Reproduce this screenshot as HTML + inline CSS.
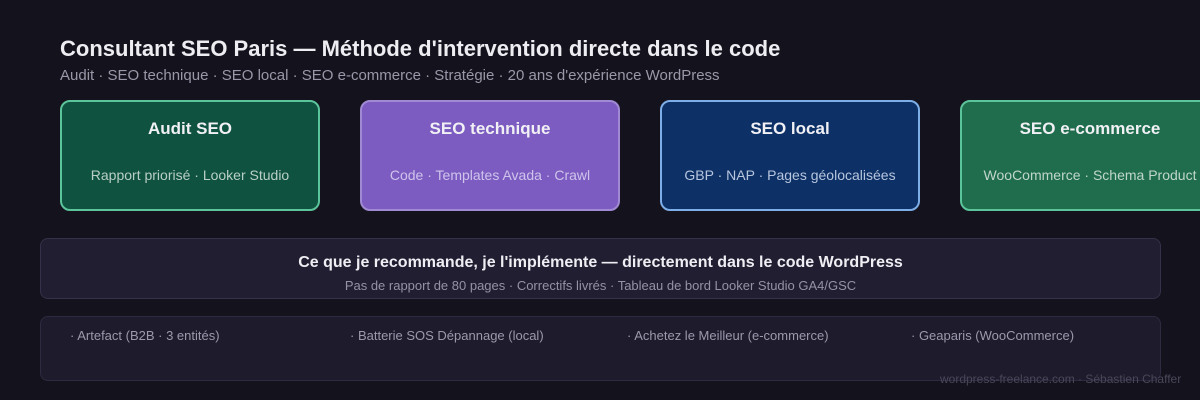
<!DOCTYPE html><html><head><style>
body{margin:0;width:1200px;height:400px;background:#14131d;font-family:"Liberation Sans",sans-serif;position:relative;overflow:hidden}
.a{position:absolute}
.card{position:absolute;top:100px;width:260px;height:111px;border-radius:10px;border:2px solid;box-sizing:border-box;text-align:center}
.card b{display:block;margin-top:17px;font-size:17px;color:#f0f0f5}
.card span{display:block;margin-top:28px;font-size:14px}
</style></head><body>
<div class="a" style="left:60px;top:36px;font-size:22px;font-weight:bold;color:#ededf2">Consultant SEO Paris — Méthode d'intervention directe dans le code</div>
<div class="a" style="left:60px;top:67px;font-size:15px;color:#9a98a8">Audit · SEO technique · SEO local · SEO e-commerce · Stratégie · 20 ans d'expérience WordPress</div>
<div class="card" style="left:60px;background:#0f5240;border-color:#5cc49a"><b>Audit SEO</b><span style="color:#b9cfc6">Rapport priorisé · Looker Studio</span></div>
<div class="card" style="left:360px;background:#7c5cc0;border-color:#a08ad4"><b>SEO technique</b><span style="color:#cfc4ec">Code · Templates Avada · Crawl</span></div>
<div class="card" style="left:660px;background:#0d3066;border-color:#7eaee8"><b>SEO local</b><span style="color:#b7c6de">GBP · NAP · Pages géolocalisées</span></div>
<div class="card" style="left:960px;background:#1f6d4c;border-color:#5cc49a"><b>SEO e-commerce</b><span style="color:#c0d6cc">WooCommerce · Schema Product</span></div>
<div class="a" style="left:40px;top:238px;width:1121px;height:61px;box-sizing:border-box;border:1px solid #35314a;border-radius:8px;background:#211e31;text-align:center">
<div style="margin-top:15px;font-size:16px;font-weight:bold;color:#eeeef3">Ce que je recommande, je l'implémente — directement dans le code WordPress</div>
<div style="margin-top:6px;font-size:13px;color:#9492a4">Pas de rapport de 80 pages · Correctifs livrés · Tableau de bord Looker Studio GA4/GSC</div></div>
<div class="a" style="left:40px;top:316px;width:1121px;height:65px;box-sizing:border-box;border:1px solid #2e2a40;border-radius:8px;background:#1e1b2c;font-size:13px;color:#9c99ac">
<span class="a" style="left:29px;top:11px">· Artefact (B2B · 3 entités)</span>
<span class="a" style="left:309px;top:11px">· Batterie SOS Dépannage (local)</span>
<span class="a" style="left:586px;top:11px">· Achetez le Meilleur (e-commerce)</span>
<span class="a" style="left:870px;top:11px">· Geaparis (WooCommerce)</span></div>
<div class="a" style="left:940px;top:372px;font-size:12px;color:#4a475a">wordpress-freelance.com · Sébastien Chaffer</div>
</body></html>
